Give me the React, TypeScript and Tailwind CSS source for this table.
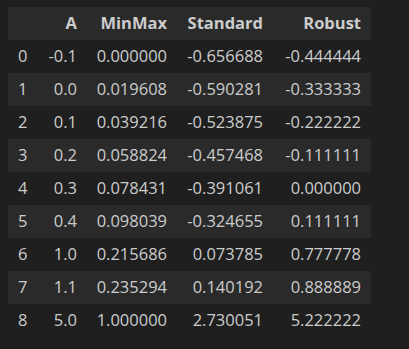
const COLUMNS = ['A', 'MinMax', 'Standard', 'Robust']

const ROWS: [string, string, string, string][] = [
  ['-0.1', '0.000000', '-0.656688', '-0.444444'],
  ['0.0', '0.019608', '-0.590281', '-0.333333'],
  ['0.1', '0.039216', '-0.523875', '-0.222222'],
  ['0.2', '0.058824', '-0.457468', '-0.111111'],
  ['0.3', '0.078431', '-0.391061', '0.000000'],
  ['0.4', '0.098039', '-0.324655', '0.111111'],
  ['1.0', '0.215686', '0.073785', '0.777778'],
  ['1.1', '0.235294', '0.140192', '0.888889'],
  ['5.0', '1.000000', '2.730051', '5.222222'],
]

const GRID = 'grid grid-cols-[29px_50px_90px_96px_98px] h-[33px] items-center'

export default function App() {
  return (
    <div className="w-[409px] h-[349px] bg-[#1f1f1f] pt-[7px] pl-[8px] text-[#cccccc] text-[16.5px] font-['Segoe_UI','Open_Sans',sans-serif]">
      <div className="w-[363px]">
        {/* Header */}
        <div className={`${GRID} bg-[#2a2a2a] font-bold`}>
          <div />
          {COLUMNS.map((c) => (
            <div key={c} className="text-right pr-[10px]">
              {c}
            </div>
          ))}
        </div>

        {/* Body rows, odd rows striped */}
        {ROWS.map((row, i) => (
          <div key={i} className={`${GRID} ${i % 2 === 1 ? 'bg-[#2a2a2a]' : ''}`}>
            <div className="pl-[10px]">{i}</div>
            {row.map((v, j) => (
              <div key={j} className="text-right pr-[10px]">
                {v}
              </div>
            ))}
          </div>
        ))}
      </div>
    </div>
  )
}
